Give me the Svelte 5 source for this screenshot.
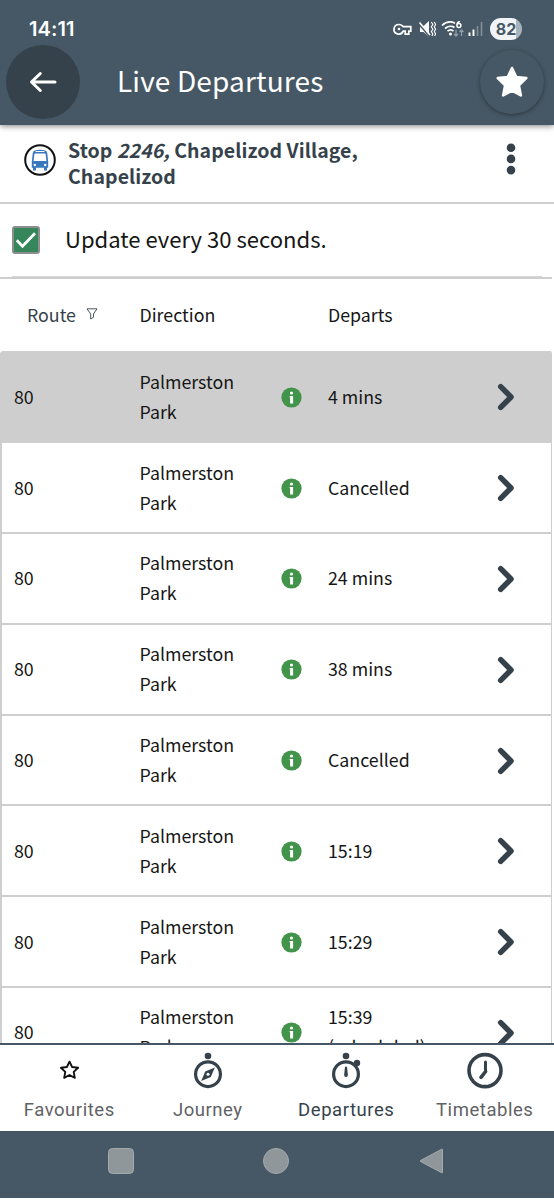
<script>
  const rows = ['4 mins', 'Cancelled', '24 mins', '38 mins', 'Cancelled', '15:19', '15:29', '15:39 (scheduled)'];
</script>

<div class="screen">
  <header>
    <div class="status">
      <span class="time">14:11</span>
      <svg class="sysicons" width="92" height="22" viewBox="0 0 92 22" fill="none" stroke="#fff">
        <path d="M6 6.500a4.800 4.800 0 1 0 4.200 6.700h2v2.900h3.600v-2.900h2V8.700h-7.600A4.800 4.800 0 0 0 6 6.500z" stroke-width="1.700" />
        <circle cx="6" cy="11" r="1.300" fill="#fff" stroke="none" />
        <path d="M27 8h3.500l5.500-5v15.500L30.500 14H27z" fill="#fff" stroke="none" />
        <path d="M26.500 6.500l10.500 12" stroke="#465865" stroke-width="2" />
        <path d="M26.500 4.500l10.500 12.500" stroke-width="1.600" />
        <path d="M38.300 4l1.600 2.500-1.600 2.300 1.600 2.500-1.600 2.300 1.600 2.500-1 1.900M41.300 4l1.300 2.500-1.300 2.300 1.300 2.500-1.300 2.300 1.300 2.500-1 1.900" stroke-width="1.100" />
        <path d="M49 7.500c4-3.700 9-4.200 13-2.300M52 10.500c3-2.700 7-2.800 9.500-1M54.500 13.200c2-1.700 4.500-1.600 6 0" stroke-width="1.700" />
        <circle cx="57.500" cy="16" r="1.500" fill="#fff" stroke="none" />
        <path d="M66.800 3.700c-1.800-.3-3.100 1.400-2.900 3.800M67.900 7.600a2 2 0 1 1-4 0 2 2 0 0 1 4 0" stroke-width="1.500" />
        <path d="M63 12v6m-2-2l2 2 2-2M68.500 18v-6m-2 2l2-2 2 2" stroke="#92a0aa" stroke-width="1.300" />
        <path d="M76.500 14.500V18M80.500 11.500V18" stroke-width="1.900" />
        <path d="M84.500 8v10M88.500 4v14" stroke="#82909a" stroke-width="1.600" />
      </svg>
      <span class="battery">82</span>
    </div>
    <div class="appbar">
      <button class="round back" aria-label="Back">
        <svg width="28" height="24" viewBox="0 0 28 24" fill="none" stroke="#fff" stroke-width="3" stroke-linecap="round" stroke-linejoin="round"><path d="M26 12H3M11.300 3.500L2.500 12l8.800 8.500" /></svg>
      </button>
      <h1>Live Departures</h1>
      <button class="round fav" aria-label="Favourite">
        <svg width="34" height="34" viewBox="0 0 34 34" fill="#fff" stroke="#fff" stroke-width="2.500" stroke-linejoin="round"><path d="M17 3l4.200 8.900 10.100 1.200-7.400 7.200 2 10.100L17 25.700l-8.900 4.700 2-10.100-7.400-7.200 10.100-1.200z" /></svg>
      </button>
    </div>
  </header>

  <section class="stop">
    <svg width="32" height="32" viewBox="0 0 32 32">
      <circle cx="16" cy="16" r="14.800" fill="#fff" stroke="#111" stroke-width="2" />
      <path d="M10.700 6.500q5.300-1.500 10.600 0 1.700.6 2 3l.9 8.500v5.700H7.800V18l.9-8.500q.3-2.400 2-3z" fill="#3978bd" />
      <path d="M10.500 9.500h11l.9 7.500H9.600z" fill="#fff" />
      <path d="M11.500 7.500h9" stroke="#fff" stroke-width="1" />
      <circle cx="10.800" cy="21" r="1.200" fill="#fff" /><circle cx="21.200" cy="21" r="1.200" fill="#fff" />
      <path d="M9 23h3v3.500H9zM20 23h3v3.500h-3z" fill="#3978bd" />
    </svg>
    <h2>Stop <em>2246,</em> Chapelizod Village,<br />Chapelizod</h2>
    <svg class="dots" width="10" height="32" viewBox="0 0 10 32" fill="#36424b"><circle cx="5" cy="4.700" r="4.300" /><circle cx="5" cy="15.900" r="4.300" /><circle cx="5" cy="27.100" r="4.300" /></svg>
  </section>

  <label class="update">
    <span class="check"><svg width="22" height="20" viewBox="0 0 22 20" fill="none" stroke="#fff" stroke-width="2.700"><path d="M1.800 10.300l5.700 5.900L20 3.300" /></svg></span>
    <span class="txt">Update every 30 seconds.</span>
  </label>
  <div class="rule"></div>

  <main>
    <div class="row head">
      <span class="route">Route <svg width="12" height="12" viewBox="0 0 12 12" fill="none" stroke="#4c5760" stroke-width="1"><path d="M1 .8h10L7.500 6v3.300L4.700 11V6z" /></svg></span>
      <span class="dir">Direction</span>
      <span></span>
      <span>Departs</span>
    </div>
    {#each rows as departs, i}
      <div class="row" class:selected={i === 0}>
        <span class="num">80</span>
        <span class="dir">Palmerston Park</span>
        <svg width="21" height="21" viewBox="0 0 21 21"><circle cx="10.500" cy="10.500" r="10.100" fill="#43944b" /><circle cx="10.500" cy="6" r="1.600" fill="#fff" /><path d="M8.600 9h3.500v7.500h-3V10.300h-.5z" fill="#fff" /></svg>
        <span class="dep">{departs}</span>
        <svg width="18" height="28" viewBox="0 0 18 28" fill="none" stroke="#36424b" stroke-width="5.500" stroke-linecap="round" stroke-linejoin="round"><path d="M3.700 3.600L14 14 3.700 24.400" /></svg>
      </div>
    {/each}
  </main>

  <nav>
    <div class="tab">
      <svg width="38" height="38" viewBox="0 0 38 38" fill="none" stroke="#111" stroke-width="1.900" stroke-linejoin="round"><path d="M19.500 9.700l2.600 5.300 6 .8-4.400 4.100 1.100 5.900-5.300-2.800-5.300 2.800 1.100-5.900-4.400-4.100 6-.8z" /></svg>
      <span>Favourites</span>
    </div>
    <div class="tab">
      <svg width="38" height="38" viewBox="0 0 38 38"><circle cx="19" cy="4" r="3.300" fill="#36424b" /><circle cx="19" cy="22.200" r="12.400" fill="none" stroke="#36424b" stroke-width="3.200" /><path d="M25.800 15.400l-4 9.600-9.600 4 4-9.600z" fill="#36424b" /><circle cx="19" cy="22.200" r="1.500" fill="#fff" /></svg>
      <span>Journey</span>
    </div>
    <div class="tab active">
      <svg width="38" height="38" viewBox="0 0 38 38"><circle cx="19" cy="4" r="3.300" fill="#36424b" /><path d="M27 14l3-3" stroke="#36424b" stroke-width="4" /><circle cx="30" cy="11" r="3.200" fill="#36424b" /><circle cx="19" cy="22.200" r="12.400" fill="none" stroke="#36424b" stroke-width="3.200" /><path d="M18 14.700h2l.9 8.400a1.900 1.900 0 0 1-3.800 0z" fill="#36424b" /></svg>
      <span>Departures</span>
    </div>
    <div class="tab">
      <svg width="38" height="38" viewBox="0 0 38 38" fill="none" stroke="#36424b"><circle cx="19" cy="18.600" r="16" stroke-width="3.600" /><path d="M19.500 10v9.500" stroke-width="3" stroke-linecap="round" /><path d="M19.600 19.500l-4.600 5.800" stroke-width="3.600" stroke-linecap="round" /></svg>
      <span>Timetables</span>
    </div>
  </nav>
  <footer>
    <svg width="26" height="26" viewBox="0 0 26 26"><rect x=".5" y=".5" width="25" height="25" rx="4" fill="#90979a" stroke="#a3aaad" /></svg>
    <svg width="26" height="26" viewBox="0 0 26 26"><circle cx="13" cy="13" r="12.500" fill="#90979a" stroke="#a3aaad" /></svg>
    <svg width="26" height="26" viewBox="0 0 26 26"><path d="M24.500 1.500v23q0 .7-.7.300L2.500 13.500q-.8-.5 0-1L23.800 1.200q.7-.4.700.300z" fill="#90979a" stroke="#a3aaad" /></svg>
  </footer>
</div>

<style>
  :global(body) { margin: 0; background: #fff; }
  .screen { width: 554px; height: 1200px; display: flex; flex-direction: column; overflow: hidden; background: #fff; color: #161616; font-family: "Noto Sans CJK SC", "Open Sans", sans-serif; }
  .screen * { box-sizing: border-box; }
  h1, h2 { margin: 0; }
  svg { display: block; flex: none; }
  button { border: 0; padding: 0; display: grid; place-items: center; flex: none; border-radius: 50%; }
  header { height: 125px; flex: none; background: #465865; box-shadow: 0 1px 6px rgba(0, 0, 0, .5); z-index: 1; }
  .status { height: 44px; padding: 14px 32px 0 29px; display: flex; align-items: center; color: #fff; }
  .time { font: 600 20px/28px Inter, sans-serif; letter-spacing: .1px; flex: 1; }
  .battery { width: 32px; height: 22px; margin-left: 5px; border-radius: 11px; background: linear-gradient(90deg, #f0f4f7 82%, #a8b3bb 82%); color: #465865; font: 700 16px/22px Inter, sans-serif; text-align: center; }
  .appbar { height: 75px; display: flex; align-items: center; padding: 0 10px 0 6px; }
  .back { width: 74px; height: 74px; background: #36424b; }
  .appbar h1 { font-size: 28px; letter-spacing: .15px; font-weight: 400; line-height: 40px; margin: 0 0 4px 37px; flex: 1; color: #fff; white-space: nowrap; }
  .fav { width: 64px; height: 64px; background: #465865; box-shadow: 0 1px 4px rgba(0, 0, 0, .4); }
  .stop { height: 79px; flex: none; display: flex; align-items: flex-start; padding: 12px 38px 0 24px; border-bottom: 2px solid #cecece; }
  .stop > svg { margin-top: 7px; }
  .stop .dots { margin-top: 6px; }
  .stop h2 { flex: 1; margin-left: 12px; font-size: 19.500px; letter-spacing: .07px; line-height: 26px; font-weight: 700; color: #36424b; white-space: nowrap; }
  .update { height: 72px; flex: none; display: flex; align-items: center; padding-left: 12px; font-size: 22.050px; line-height: 32px; white-space: nowrap; }
  .txt { margin-bottom: 5px; }
  .check { width: 28px; height: 28px; margin-right: 25px; display: grid; place-items: center; background: #35865a; border: 2px solid #8e8e8e; border-radius: 3px; }
  .rule { height: 1px; flex: none; margin: 0 12px; background: #d6d6d6; }
  main { height: 766px; flex: none; overflow: hidden; margin-right: 2px; border-top: 2px solid #cecece; font-size: 17.800px; line-height: 30px; }
  .row { height: 90.800px; display: grid; grid-template-columns: 137.500px 141.500px 47px 169px 1fr; align-items: center; border: solid #cecece; border-width: 0 1px 2px 2px; }
  .row > span { margin-bottom: 2px; }
  .row > svg { margin-top: 1px; }
  .row.head { height: 73.500px; border-color: transparent transparent #cecece; }
  .row.selected { background: #cecece; }
  .route { display: flex; align-items: center; gap: 10px; padding-left: 25px; color: #36424b; }
  .num { padding-left: 12px; }
  .dir { width: 110px; }
  .dep { width: 110px; }
  nav { height: 88px; flex: none; border-top: 2px solid #465865; display: grid; grid-template-columns: repeat(4, 138.500px); background: #fff; }
  .tab { display: flex; flex-direction: column; align-items: center; padding-top: 7px; color: #5f6265; font: 400 18.500px/24px Roboto, sans-serif; letter-spacing: .55px; }
  .tab span { margin-top: 8px; }
  .active { color: #36424b; }
  footer { height: 67px; flex: none; background: #465865; display: flex; align-items: center; gap: 129px; padding: 0 0 7px 108px; }
</style>
